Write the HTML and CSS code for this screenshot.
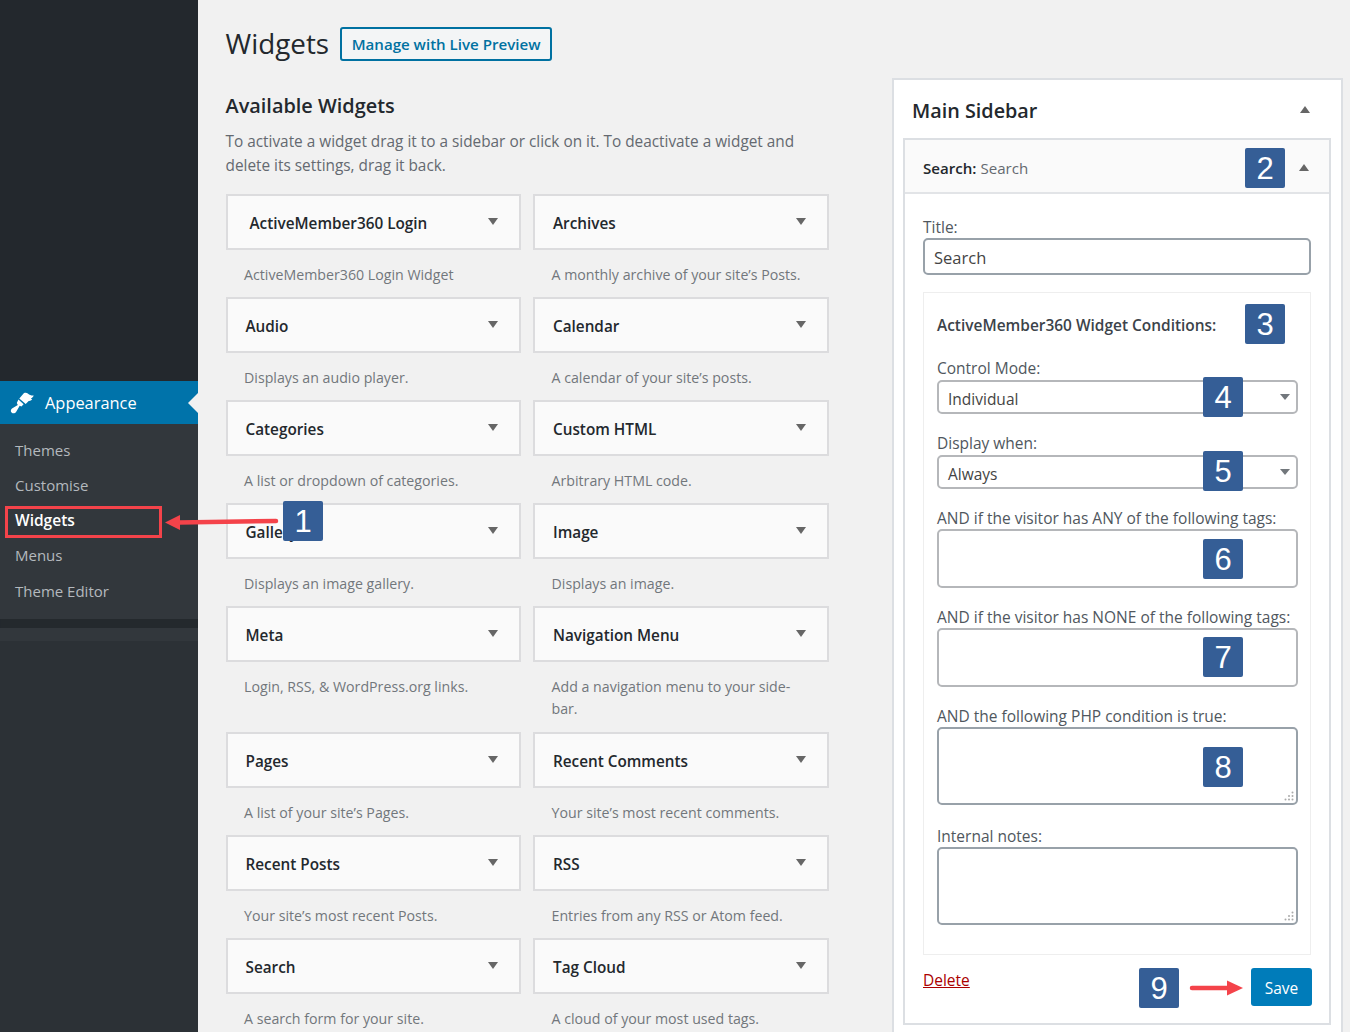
FILE: index.html
```html
<!DOCTYPE html>
<html lang="en">
<head>
<meta charset="utf-8">
<title>Widgets</title>
<link rel="stylesheet" href="styles.css">
</head>
<body>
<div class="page">
  <nav class="adminmenu">
    <div class="menu-current">
      <svg class="brush" viewBox="0 0 24 22" width="24" height="22"><path d="M9.300 6.500 13.800 1.200c1.600-.9 3.200-.4 4.300.5 1.300 1 2.700 2 5.600 1.900-.5 1.500-1.500 2.500-2.800 2.900 .4.500.8.800 1.300 1-1 1-2.200 1.600-3.500 1.400l-3 3zM8.400 7.400 13.600 12.200 11.400 14.400 9.700 13.800 6.200 19.800C5.200 21.300 3.200 21.900 1.800 20.800 .3 19.500 .6 17.500 2 16.400L7.800 13 6.800 11z"/></svg>
      <span>Appearance</span>
    </div>
    <ul class="submenu">
      <li>Themes</li>
      <li>Customise</li>
      <li class="active">Widgets</li>
      <li>Menus</li>
      <li>Theme Editor</li>
    </ul>
    <div class="menu-band"></div>
    <div class="menu-tail"></div>
    <div class="menu-rest"></div>
  </nav>

  <main class="content">
    <section class="available">
      <header class="title-row">
        <h1>Widgets</h1>
        <a class="outline-btn">Manage with Live Preview</a>
      </header>
      <h2>Available Widgets</h2>
      <p class="intro">To activate a widget drag it to a sidebar or click on it. To deactivate a widget and delete its settings, drag it back.</p>
      <div class="widget-grid">
        <div class="widget"><div class="card card-wide"><span>ActiveMember360 Login</span><i class="tri-down"></i></div><p>ActiveMember360 Login Widget</p></div>
        <div class="widget"><div class="card"><span>Archives</span><i class="tri-down"></i></div><p>A monthly archive of your site’s Posts.</p></div>
        <div class="widget"><div class="card"><span>Audio</span><i class="tri-down"></i></div><p>Displays an audio player.</p></div>
        <div class="widget"><div class="card"><span>Calendar</span><i class="tri-down"></i></div><p>A calendar of your site’s posts.</p></div>
        <div class="widget"><div class="card"><span>Categories</span><i class="tri-down"></i></div><p>A list or dropdown of categories.</p></div>
        <div class="widget"><div class="card"><span>Custom HTML</span><i class="tri-down"></i></div><p>Arbitrary HTML code.</p></div>
        <div class="widget"><div class="card"><span>Gallery</span><i class="tri-down"></i></div><p>Displays an image gallery.</p></div>
        <div class="widget"><div class="card"><span>Image</span><i class="tri-down"></i></div><p>Displays an image.</p></div>
        <div class="widget"><div class="card"><span>Meta</span><i class="tri-down"></i></div><p>Login, RSS, &amp; WordPress.org links.</p></div>
        <div class="widget"><div class="card"><span>Navigation Menu</span><i class="tri-down"></i></div><p class="two-line">Add a navigation menu to your side-<br>bar.</p></div>
        <div class="widget"><div class="card"><span>Pages</span><i class="tri-down"></i></div><p>A list of your site’s Pages.</p></div>
        <div class="widget"><div class="card"><span>Recent Comments</span><i class="tri-down"></i></div><p>Your site’s most recent comments.</p></div>
        <div class="widget"><div class="card"><span>Recent Posts</span><i class="tri-down"></i></div><p>Your site’s most recent Posts.</p></div>
        <div class="widget"><div class="card"><span>RSS</span><i class="tri-down"></i></div><p>Entries from any RSS or Atom feed.</p></div>
        <div class="widget"><div class="card"><span>Search</span><i class="tri-down"></i></div><p>A search form for your site.</p></div>
        <div class="widget"><div class="card"><span>Tag Cloud</span><i class="tri-down"></i></div><p>A cloud of your most used tags.</p></div>
      </div>
    </section>

    <aside class="sidebar-panel">
      <div class="panel-head">
        <h3>Main Sidebar</h3>
        <i class="tri-up"></i>
      </div>
      <div class="sidebar-widget">
        <div class="sw-head">
          <span><b>Search:</b> Search</span>
          <i class="tri-up"></i>
        </div>
        <div class="sw-body">
          <label class="lbl">Title:</label>
          <div class="control title-input">Search</div>
          <div class="conditions">
            <h4>ActiveMember360 Widget Conditions:</h4>
            <div class="field">
              <label class="lbl">Control Mode:</label>
              <div class="control select">Individual</div>
            </div>
            <div class="field">
              <label class="lbl">Display when:</label>
              <div class="control select">Always</div>
            </div>
            <div class="field">
              <label class="lbl">AND if the visitor has ANY of the following tags:</label>
              <div class="control tags"></div>
            </div>
            <div class="field">
              <label class="lbl">AND if the visitor has NONE of the following tags:</label>
              <div class="control tags"></div>
            </div>
            <div class="field">
              <label class="lbl">AND the following PHP condition is true:</label>
              <div class="control area">
                <svg class="grip" viewBox="0 0 10 10" width="10" height="10"><circle cx="8.500" cy="1.500" r="1"/><circle cx="5" cy="5" r="1"/><circle cx="8.500" cy="5" r="1"/><circle cx="1.500" cy="8.500" r="1"/><circle cx="5" cy="8.500" r="1"/><circle cx="8.500" cy="8.500" r="1"/></svg>
              </div>
            </div>
            <div class="field field-notes">
              <label class="lbl">Internal notes:</label>
              <div class="control area">
                <svg class="grip" viewBox="0 0 10 10" width="10" height="10"><circle cx="8.500" cy="1.500" r="1"/><circle cx="5" cy="5" r="1"/><circle cx="8.500" cy="5" r="1"/><circle cx="1.500" cy="8.500" r="1"/><circle cx="5" cy="8.500" r="1"/><circle cx="8.500" cy="8.500" r="1"/></svg>
              </div>
            </div>
          </div>
          <div class="actions">
            <a class="delete">Delete</a>
            <a class="save">Save</a>
          </div>
        </div>
      </div>
    </aside>
  </main>

  <div class="highlight"></div>
  <svg class="arrow arrow-left" viewBox="0 0 114 16" width="114" height="16"><path class="shaft" d="M14 8.500 111 7"/><path class="head" d="M0 8.500 15 1 15 16z"/></svg>
  <svg class="arrow arrow-right" viewBox="0 0 54 16" width="54" height="16"><path class="shaft" d="M3 8 40 8"/><path class="head" d="M54 8 38 .5 38 15.500z"/></svg>

  <div class="badge b1">1</div>
  <div class="badge b2">2</div>
  <div class="badge b3">3</div>
  <div class="badge b4">4</div>
  <div class="badge b5">5</div>
  <div class="badge b6">6</div>
  <div class="badge b7">7</div>
  <div class="badge b8">8</div>
  <div class="badge b9">9</div>
</div>
</body>
</html>
```
FILE: styles.css
```css
* { box-sizing: border-box; }
html, body { margin: 0; height: 1032px; overflow: hidden; }
body { background: #f1f1f1; font-family: "Open Sans", "Noto Sans", sans-serif; color: #444; }
.page { position: relative; display: flex; width: 1350px; height: 1032px; overflow: hidden; }

/* Admin menu */
.adminmenu { flex: 0 0 198px; display: flex; flex-direction: column; background: #23282d; padding-top: 381px; }
.menu-current { position: relative; display: flex; align-items: center; height: 43px; background: #0073aa; color: #fff; font-size: 16.400px; padding-left: 10px; gap: 11px; }
.menu-current::after { content: ""; position: absolute; right: 0; top: 12px; border: 10px solid transparent; border-left: 0; border-right-color: #f1f1f1; }
.brush { fill: #fff; flex: none; }
.submenu { list-style: none; margin: 0; padding: 8.500px 0 0 15px; background: #32373c; color: #b4b9be; font-size: 15px; height: 195px; }
.submenu li { height: 35px; line-height: 35px; }
.submenu li:last-child { margin-top: 1.500px; }
.submenu .active { color: #fff; font-size: 15.500px; font-weight: 600; }
.menu-band { height: 9px; margin-left: 1px; background: #24292d; }
.menu-tail { height: 13px; background: #32373c; }
.menu-rest { flex: 1; background: #2c3136; }

/* Main content */
.content { flex: 1; display: flex; padding-left: 27.500px; }
.available { flex: 0 0 603px; padding-top: 27px; }
.title-row { display: flex; align-items: center; gap: 11px; height: 34px; }
h1 { margin: -2px 0 0; font-size: 27.800px; font-weight: 400; color: #23282d; line-height: 34px; }
.outline-btn { display: flex; align-items: center; justify-content: center; width: 212px; height: 34px; border: 2px solid #0071a1; border-radius: 3px; background: #f3f5f6; color: #0071a1; font-size: 15.100px; font-weight: 600; }
h2 { margin: 30px 0 0; font-size: 19.900px; line-height: 30px; font-weight: 600; color: #23282d; }
.intro { margin: 9px 0 0; font-size: 15.360px; line-height: 24px; color: #646970; width: 590px; }
.widget-grid { display: grid; grid-template-columns: 295.500px 295.500px; column-gap: 12px; row-gap: 11.500px; margin-top: 16.200px; }
.card { display: flex; align-items: center; justify-content: space-between; height: 56px; padding: 1px 21px 0 18px; border: 2px solid #dcdcde; background: #fafafa; color: #23282d; font-size: 15.300px; font-weight: 600; }
.card-wide { padding-left: 22px; }
.widget p { margin: 13.500px 0 0; padding-left: 18.500px; font-size: 14.200px; line-height: 22px; color: #72777c; }
.widget .two-line { margin-bottom: 1px; }
.tri-down { display: block; margin-top: -2px; border: 5px solid transparent; border-top: 7px solid #666; border-bottom: 0; }
.tri-up { display: block; margin-top: -1px; border: 5px solid transparent; border-bottom: 7px solid #666; border-top: 0; }

/* Sidebar panel */
.sidebar-panel { flex: 0 0 451px; height: 1000px; margin: 78px 0 0 63.500px; border: 2px solid #dcdfe3; background: #fff; padding: 0 10px 0 9px; }
.panel-head { display: flex; align-items: center; justify-content: space-between; height: 58px; padding: 2px 21px 0 9px; }
h3 { margin: 0; font-size: 19.800px; font-weight: 600; color: #23282d; }
.sidebar-widget { height: 887px; border: 2px solid #dcdfe3; }
.sw-head { display: flex; align-items: center; justify-content: space-between; height: 54px; padding: 3px 20px 0 18px; background: #fafafa; border-bottom: 2px solid #e2e4e7; color: #646970; font-size: 15.100px; }
.sw-head b { color: #23282d; font-weight: 600; }
.sw-body { padding: 22px 18px 0 18px; }
.lbl { display: block; height: 22px; line-height: 23px; font-size: 15.500px; color: #50575e; white-space: nowrap; }
.control { position: relative; background: #fff; border: 2px solid #b5b7ba; border-radius: 5px; color: #444; font-size: 15.500px; }
.title-input { height: 37px; line-height: 36px; padding-left: 9px; border-color: #98a1a9; font-size: 16.500px; }
.conditions { display: flex; flex-direction: column; height: 663px; margin-top: 17px; padding: 0 12px 0 13px; border: 1px solid #eee; }
h4 { margin: 21px 0 0; font-size: 15.450px; line-height: 22px; font-weight: 600; color: #3c434a; }
.field { margin-top: 18px; }
h4 + .field { margin-top: 21px; }
.field-notes { margin-top: 20px; }
.select { height: 34px; margin-top: 1px; line-height: 35px; padding-left: 9px; }
.select::after { content: ""; position: absolute; right: 6px; top: 12px; border: 5px solid transparent; border-top: 6px solid #72777c; border-bottom: 0; }
.tags { height: 59px; }
.area { height: 78px; border-color: #98a1a9; }
.grip { position: absolute; right: 2px; bottom: 2px; fill: #aaa; }
.actions { display: flex; align-items: flex-start; justify-content: space-between; margin: 13px -1px 0 0; }
.delete { margin-top: 1px; color: #a00; text-decoration: underline; font-size: 15.500px; line-height: 22px; }
.save { display: flex; align-items: center; justify-content: center; width: 61px; height: 38px; padding-top: 1px; border-radius: 3px; background: #007cba; color: #fff; font-size: 15.500px; }

/* Annotations over the page */
.highlight { position: absolute; left: 5px; top: 506px; width: 157px; height: 32px; border: 3px solid #f4434a; }
.arrow { position: absolute; }
.arrow .shaft { fill: none; stroke: #f4434a; stroke-width: 4.500px; stroke-linecap: round; }
.arrow .head { fill: #f4434a; }
.arrow-left { left: 165px; top: 514px; }
.arrow-right { left: 1189px; top: 980px; }
.badge { position: absolute; display: flex; align-items: center; justify-content: center; width: 40px; height: 40px; padding-top: 2px; border-radius: 2px; background: #355e96; color: #fff; font-family: "Liberation Sans", Arial, sans-serif; font-size: 31px; }
.b1 { left: 283px; top: 501px; }
.b2 { left: 1245px; top: 148px; }
.b3 { left: 1245px; top: 304px; }
.b4 { left: 1203px; top: 377px; }
.b5 { left: 1203px; top: 451px; }
.b6 { left: 1203px; top: 539px; }
.b7 { left: 1203px; top: 637px; }
.b8 { left: 1203px; top: 747px; }
.b9 { left: 1139px; top: 968px; }
```
